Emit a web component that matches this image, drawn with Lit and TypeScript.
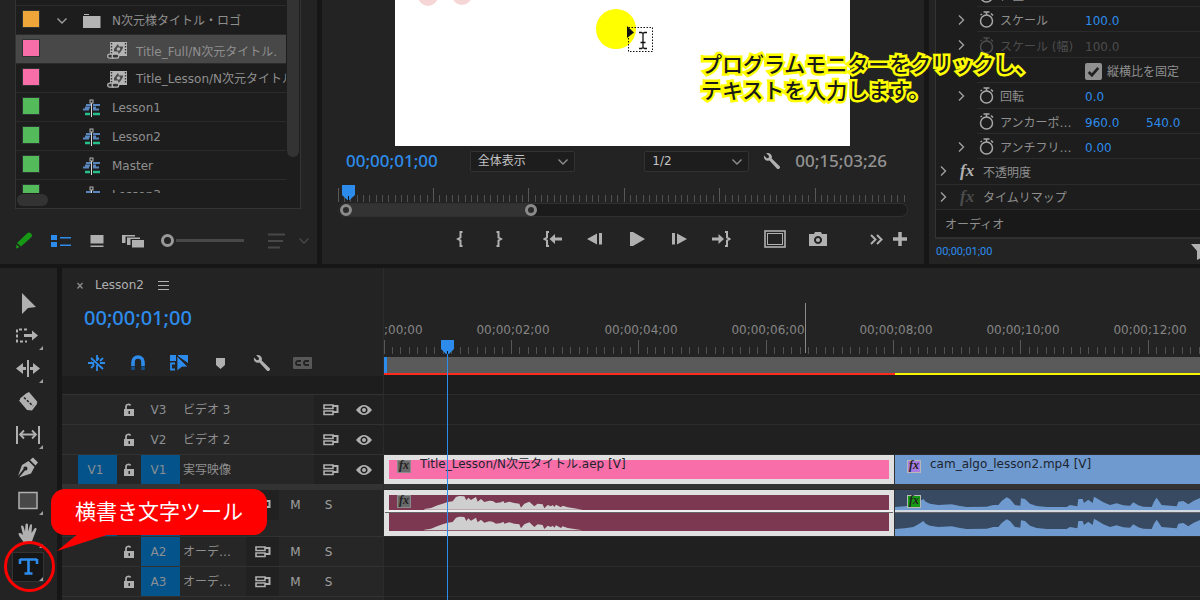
import { LitElement, html, svg, css, nothing } from "lit";
import { customElement, property } from "lit/decorators.js";

const base = css`
  *, *::before, *::after { box-sizing: border-box; }
  :host { display: block; color: #8f8f8f; font: 12px/16px "DejaVu Sans", "Noto Sans CJK JP", sans-serif; }
  button { display: flex; align-items: center; justify-content: center; padding: 0; margin: 0; border: 0; background: none; color: #b0b0b0; font: inherit; }
  svg { display: block; flex: none; }
`;

const chevronRight = html`<svg width="8" height="12" viewBox="0 0 8 12"><path d="M1 1.500 5.500 6 1 10.500" fill="none" stroke="#a0a0a0" stroke-width="1.400"/></svg>`;
const chevronDown = (c: string) => html`<svg width="12" height="12" viewBox="0 0 12 12"><path d="M1.500 3.500 6 8l4.500-4.500" fill="none" stroke=${c} stroke-width="1.400"/></svg>`;
const wrench = html`<svg width="18" height="18" viewBox="0 0 18 18"><path fill="#b0b0b0" d="M3.200 1.200 6 4 5.600 6 3.800 6.300 1 3.600C.4 6.400 2 8.900 5 8.800L6.500 8.600 13.800 16.400C15.500 18.200 18.200 15.600 16.400 13.900L8.700 6.600C9.800 3 7 .3 3.200 1.200Z"/></svg>`;

/* ---------- project panel ---------- */

const clipIcon = html`<svg width="20" height="19" viewBox="0 0 20 19">
  <rect x="3" y="1" width="17" height="14" fill="#b4b4b4"/>
  <path d="M4.500 2v12M18.500 2v12" stroke="#333" stroke-width="1.400" stroke-dasharray="1.500 1.500"/>
  <path d="M7 8 11 3l1 2.500h4V7l-2.500 4-2 2L11 10.500H7Z" fill="#4a4a4a"/><circle cx="11.500" cy="8" r="1.800" fill="#b4b4b4"/>
  <rect x=".7" y="13.200" width="6.500" height="4" rx="2" fill="#333" stroke="#b4b4b4" stroke-width="1.300"/>
  <rect x="5.200" y="13.200" width="6.500" height="4" rx="2" fill="#333" stroke="#b4b4b4" stroke-width="1.300"/></svg>`;
const sequenceIcon = html`<svg width="18" height="18" viewBox="0 0 18 18">
  <path d="M3 6h5M0 10.500h6M2 8.500h5M10 6h7M10 8.500h3M10 10.500h6" stroke="#5b86bd" stroke-width="2"/>
  <path d="M2 15h5M10 15h7" stroke="#27c08a" stroke-width="2.500"/>
  <path d="M8.500 3v15" stroke="#d8d8d8"/><rect x="7" y="1" width="3" height="3" fill="#222" stroke="#b4b4b4"/></svg>`;
const folderIcon = html`<svg width="18" height="14" viewBox="0 0 18 14"><path fill="#b4b4b4" d="M1 0h5v1H1zM0 2h17.500v12H0z"/></svg>`;

type Item = { color: string; kind: "bin" | "clip" | "seq"; name: string; selected?: boolean };
const items: Item[] = [
  { color: "#eea63a", kind: "bin", name: "N次元様タイトル・ロゴ" },
  { color: "#f86ea8", kind: "clip", name: "Title_Full/N次元タイトル.", selected: true },
  { color: "#f86ea8", kind: "clip", name: "Title_Lesson/N次元タイトル" },
  { color: "#53bb59", kind: "seq", name: "Lesson1" },
  { color: "#53bb59", kind: "seq", name: "Lesson2" },
  { color: "#53bb59", kind: "seq", name: "Master" },
  { color: "#53bb59", kind: "seq", name: "Lesson3" },
];

@customElement("project-panel")
class ProjectPanel extends LitElement {
  static styles = [base, css`
    :host { background: #232323; display: flex; flex-direction: column; height: 264px; padding: 0 16px 0 15px; }
    .box { height: 209px; background: #1d1d1d; border: 1px solid #343434; border-top: 0; display: grid; grid-template: 193px 15px / minmax(0, 1fr) 14px; }
    .list { overflow: hidden; margin: 0; padding: 0; list-style: none; }
    .cut { height: 6px; border-bottom: 1px solid #2b2b2b; }
    .item { display: flex; align-items: center; height: 29px; border-bottom: 1px solid #2b2b2b; padding: 2px 0 0 6px; white-space: nowrap; overflow: hidden; }
    .selected { background: #484848; }
    .selected .name { padding-top: 3px; }
    .swatch { flex: none; width: 18px; height: 18px; border: 1px solid #2e3434; margin-bottom: 5px; }
    .twirl { flex: none; width: 43px; display: flex; justify-content: center; }
    .icon { flex: none; width: 29px; }
    .clip { margin-left: 24px; }
    .vbar { padding: 0 1px; }
    .vthumb { height: 157px; background: #333; border-radius: 0 0 6px 6px; }
    .hthumb { width: 31px; height: 12px; margin: 1px 0 0 1px; background: #333; border-radius: 6px; }
    .foot { display: flex; align-items: center; height: 55px; padding-top: 8px; margin-right: -16px; }
    .foot button { flex: none; width: 36px; }
    .foot .pencil { width: 18px; margin-right: 10px; }
    .zoom { flex: none; appearance: none; width: 84px; height: 14px; margin: 0 15px 0 10px; background: linear-gradient(#484848, #484848) 15px 50% / 68px 3px no-repeat; }
    .zoom::-webkit-slider-thumb { appearance: none; width: 13px; height: 13px; border-radius: 50%; border: 3px solid #999; background: #232323; }
    .foot .sort { width: 32px; }
    .foot .more { width: 24px; }
  `];
  render() {
    return html`
      <div class="box">
        <ul class="list">
          <li class="cut"></li>
          ${items.map((i) => html`<li class="item ${i.selected ? "selected" : ""}">
            <span class="swatch" style="background:${i.color}"></span>
            <span class="twirl">${i.kind === "bin" ? chevronDown("#a0a0a0") : nothing}</span>
            <span class="icon ${i.kind === "clip" ? "clip" : ""}">${i.kind === "bin" ? folderIcon : i.kind === "clip" ? clipIcon : sequenceIcon}</span>
            <span class="name">${i.name}</span></li>`)}
        </ul>
        <div class="vbar"><div class="vthumb"></div></div>
        <div><div class="hthumb"></div></div>
      </div>
      <div class="foot">
        <button class="pencil" aria-label="Writable"><svg width="18" height="17" viewBox="0 0 18 17"><path d="M2 11 12 1.500Q14-.5 16 1.500 18 3.500 16 5.500L6 14.500Z" fill="#169a16"/><path d="M1.500 12.500 4.500 15.200 1 16.500Z" fill="#169a16"/></svg></button>
        <button aria-label="List view"><svg width="20" height="14" viewBox="0 0 20 14"><path fill="#2d8ceb" d="M0 1h6v5H0zM0 8h6v5H0zM9 3h11v1.500H9zM9 10.500h11V12H9z"/></svg></button>
        <button aria-label="Icon view"><svg width="14" height="14" viewBox="0 0 14 14"><path fill="#b0b0b0" d="M.5 1h13v8.500H.5zM.5 11.500h13V13H.5z"/></svg></button>
        <button aria-label="Freeform view"><svg width="24" height="14" viewBox="0 0 24 14"><path fill="#b0b0b0" d="M1 1h13v1.500H4.500V9H1z"/><path fill="#b0b0b0" d="M6 3.500h13V5H9.500v6H6z"/><path fill="#b0b0b0" d="M11 6h12v7.500H11z"/></svg></button>
        <input class="zoom" type="range" value="0" aria-label="Thumbnail size">
        <button class="sort" aria-label="Sort"><svg width="17" height="16" viewBox="0 0 17 16"><path d="M0 1.500h17M0 8h15M0 14.500h12" stroke="#484848" stroke-width="2"/></svg></button>
        <button class="more" aria-label="More">${chevronDown("#484848")}</button>
      </div>`;
  }
}

/* ---------- program monitor ---------- */

const ticks = (count: number, pitch: number, top: number, bottom: number) =>
  Array.from({ length: count }, (_, i) => svg`<path d="M${Math.floor(i * pitch) + 0.5} ${i % 15 ? bottom - 7 : top}V${bottom}" stroke=${i % 15 ? "#505050" : "#585858"}/>`);

@customElement("program-monitor")
class ProgramMonitor extends LitElement {
  static styles = [base, css`
    :host { background: #232323; position: relative; z-index: 1; height: 264px; }
    .stage { display: flex; justify-content: center; padding-right: 2px; }
    .frame { background: #fff; }
    .note { position: absolute; left: 379px; top: 50px; margin: 0; font: 500 21px/26px "Noto Sans CJK JP", sans-serif; color: #1a1a1a; white-space: nowrap; -webkit-text-stroke: 5px #ff0; paint-order: stroke fill; }
    .bar { display: flex; align-items: center; height: 30px; padding: 0 37px 0 24px; }
    .tc { font: 500 17px/24px "Noto Sans", sans-serif; color: #2d8ceb; }
    .total { color: #929292; margin-left: 14px; }
    .pick { position: relative; width: 105px; margin-left: 32px; }
    .pick svg { position: absolute; right: 6px; top: 5px; pointer-events: none; }
    .scale { margin-left: auto; margin-right: 14px; }
    select { appearance: none; width: 100%; height: 21px; padding: 0 7px; border: 1px solid #323232; border-radius: 2px; background: #1d1d1d; color: #c4c4c4; font: inherit; }
    .time { padding: 7px 16px 0; }
    .scrub { height: 14px; background: #1b1b1b; border: 1px solid #303030; border-radius: 7px; }
    .range { height: 100%; width: 197px; background: #333; display: flex; justify-content: space-between; border-radius: 7px; margin-left: 1px; }
    .grip { width: 12px; height: 12px; border: 3px solid #8a8a8a; border-radius: 50%; background: #2b2b2b; }
    .transport { display: flex; align-items: center; height: 44px; padding: 0 12px 0 118px; }
    .marks, .play, .out, .extra { display: flex; }
    .marks { margin-right: 14px; } .play { margin-right: 11px; } .extra { margin-left: auto; }
    .marks button { width: 39px; } .play button { width: 42px; } .out button { width: 43px; } .extra button { width: 24px; }
  `];
  render() {
    return html`
      <div class="stage"><svg class="frame" width="455" height="146" viewBox="0 0 455 146">
        <circle cx="33" cy="-4" r="10" fill="#f6d5d6"/><circle cx="67" cy="-5" r="10" fill="#f6d5d6"/>
        <circle cx="221" cy="29" r="20" fill="#ff0"/>
        <rect x="233.500" y="27.500" width="24" height="24" fill="none" stroke="#111" stroke-dasharray="1.500 1.500"/>
        <path d="M232 26v12l7-5.500z" fill="#111"/>
        <path d="M244 32.500h2.500l1.500 1 1.500-1h2.500M248 33.500v14M245.500 42.500h5M244 48.500h2.500l1.500-1 1.500 1h2.500" fill="none" stroke="#111" stroke-width="1.300"/>
      </svg></div>
      <div class="bar">
        <span class="tc">00;00;01;00</span>
        <label class="pick"><select aria-label="Zoom"><option>全体表示</option></select>${chevronDown("#8f8f8f")}</label>
        <label class="pick scale"><select aria-label="Resolution"><option>1/2</option></select>${chevronDown("#8f8f8f")}</label>
        ${wrench}
        <span class="tc total">00;15;03;26</span>
      </div>
      <div class="time">
        <svg width="100%" height="20">${ticks(90, 6.36, 5, 19)}
          <path d="M4 2h13v10l-6.500 6L4 12z" fill="#2d8ceb"/><path d="M10.500 13v5" stroke="#111"/></svg>
        <div class="scrub"><div class="range"><i class="grip"></i><i class="grip"></i></div></div>
      </div>
      <div class="transport">
        <div class="marks">
          <button aria-label="Mark in"><svg width="8" height="16" viewBox="0 0 8 16"><path d="M6.500 1H4.500V6.500L2 8l2.500 1.500V15h2" fill="none" stroke="#b0b0b0" stroke-width="2"/></svg></button>
          <button aria-label="Mark out"><svg width="8" height="16" viewBox="0 0 8 16"><path d="M1.500 1h2V6.500L6 8 3.500 9.500V15h-2" fill="none" stroke="#b0b0b0" stroke-width="2"/></svg></button>
        </div>
        <div class="play">
          <button aria-label="Go to in"><svg width="20" height="16" viewBox="0 0 20 16"><path d="M6 1H4V6.500L1.500 8 4 9.500V15h2" fill="none" stroke="#b0b0b0" stroke-width="2"/><path d="M6.500 8 12 3v3.500h7v3h-7V13z" fill="#b0b0b0"/></svg></button>
          <button aria-label="Step back"><svg width="16" height="12" viewBox="0 0 16 12"><path d="M0 6 10 .5v11zM12 0h3v11.500h-3z" fill="#b0b0b0"/></svg></button>
          <button aria-label="Play"><svg width="15" height="14" viewBox="0 0 15 14"><path d="M0 0h3L15 7 3 14H0z" fill="#b0b0b0"/></svg></button>
          <button aria-label="Step forward"><svg width="16" height="12" viewBox="0 0 16 12"><path d="M16 6 6 .5v11zM1 0h3v11.500H1z" fill="#b0b0b0"/></svg></button>
          <button aria-label="Go to out"><svg width="20" height="16" viewBox="0 0 20 16"><path d="M14 1h2V6.500L18.500 8 16 9.500V15h-2" fill="none" stroke="#b0b0b0" stroke-width="2"/><path d="M13 8 7.500 3v3.500H1v3h6.500V13z" fill="#b0b0b0"/></svg></button>
        </div>
        <div class="out">
          <button aria-label="Full frame"><svg width="22" height="18" viewBox="0 0 22 18"><rect x="1" y="1" width="20" height="16" fill="none" stroke="#b0b0b0" stroke-width="1.600"/><rect x="3.500" y="3.500" width="15" height="11" fill="none" stroke="#b0b0b0"/></svg></button>
          <button aria-label="Export frame"><svg width="18" height="14" viewBox="0 0 18 14"><path fill="#b0b0b0" fill-rule="evenodd" d="M0 2h5l1-2h6l1 2h5v12H0zM9 4a4 4 0 1 0 .01 0zM9 6a2 2 0 1 1-.01 0z"/></svg></button>
        </div>
        <div class="extra">
          <button aria-label="More"><svg width="13" height="11" viewBox="0 0 13 11"><path d="M1 1l4.500 4.500L1 10M7 1l4.500 4.500L7 10" fill="none" stroke="#b0b0b0" stroke-width="2"/></svg></button>
          <button aria-label="Add button"><svg width="14" height="14" viewBox="0 0 14 14"><path d="M7 0v14M0 7h14" stroke="#b0b0b0" stroke-width="3.500"/></svg></button>
        </div>
      </div>
      <p class="note">プログラムモニターをクリックし、<br>テキストを入力します。</p>`;
  }
}

/* ---------- effect controls ---------- */

const stopwatch = html`<svg width="15" height="17" viewBox="0 0 15 17"><circle cx="7.500" cy="10" r="6" fill="none" stroke="currentColor" stroke-width="1.500"/><path d="M7.500 1v3M4.500 1h6M12 2.500l2 2M1.500 4l1.500-1" stroke="currentColor" stroke-width="1.500"/></svg>`;

type Param = { label: string; values: string[]; twirl?: boolean; dim?: boolean };
const params: Param[] = [
  { label: "スケール", values: ["100.0"], twirl: true },
  { label: "スケール (幅)", values: ["100.0"], twirl: true, dim: true },
  { label: "", values: [] },
  { label: "回転", values: ["0.0"], twirl: true },
  { label: "アンカーポ…", values: ["960.0", "540.0"] },
  { label: "アンチフリ…", values: ["0.00"], twirl: true },
];

@customElement("effect-controls")
class EffectControls extends LitElement {
  static styles = [base, css`
    :host { background: #232323; display: flex; flex-direction: column; height: 264px; padding-left: 6px; overflow: hidden; }
    .rows { flex: 1; display: grid; grid-template-rows: 7px repeat(8, 1fr) 27px; background: #1d1d1d; border-left: 1px solid #343434; border-bottom: 2px solid #303030; min-height: 0; }
    .first { overflow: hidden; display: flex; flex-direction: column; justify-content: flex-end; }
    .row { display: grid; align-items: center; white-space: nowrap; }
    .first .row { flex: none; height: 25px; }
    .param { background: linear-gradient(#2b2b2b, #2b2b2b) 41px 100% / 100% 1px no-repeat; grid-template-columns: 41px 23px 85px 61px 1fr; }
    .tw { padding-left: 22px; }
    .name, .value, .ratio { padding-top: 3px; }
    .watch { color: #a8a8a8; padding-left: 2px; }
    .dim, .dim .watch, .dim .value { color: #4c4c4c; }
    .value { color: #2d8ceb; }
    .ratio { grid-column: 4 / -1; display: flex; align-items: center; gap: 5px; }
    .tick { appearance: none; width: 17px; height: 17px; margin: 0; border-radius: 2px; background: #909090 url("data:image/svg+xml,%3Csvg xmlns='http://www.w3.org/2000/svg' viewBox='0 0 16 16'%3E%3Cpath d='M3.500 8.500 6.500 11.500 12.500 4.500' fill='none' stroke='%23222' stroke-width='2.500'/%3E%3C/svg%3E"); }
    .group { grid-template-columns: 20px 23px 1fr; padding-left: 4px; border-bottom: 1px solid #2b2b2b; }
    .fx { font: italic bold 17px/16px "Liberation Serif", serif; color: #b0b0b0; }
    .off { color: #4c4c4c; }
    .audio { display: flex; align-items: center; padding: 2px 0 0 9px; background: #191919; }
    .foot { display: flex; align-items: center; justify-content: space-between; height: 25px; }
    .tc { font: 11px/16px Roboto, sans-serif; color: #2d8ceb; padding-left: 1px; }
  `];
  row(p: Param) {
    return html`<div class="row param ${p.dim ? "dim" : ""}">
      <span class="tw">${p.twirl ? chevronRight : nothing}</span>
      <span class="watch">${stopwatch}</span><span class="name">${p.label}</span>
      ${p.values.map((v) => html`<span class="value">${v}</span>`)}</div>`;
  }
  render() {
    return html`
      <div class="rows">
        <div class="first">${this.row({ label: "位置", values: [] })}</div>
        ${params.map((p) => p.label ? this.row(p) : html`<div class="row param">
          <span></span><span></span><span></span>
          <label class="ratio"><input class="tick" type="checkbox" checked>縦横比を固定</label></div>`)}
        <div class="row group">${chevronRight}<span class="fx">fx</span><span class="name">不透明度</span></div>
        <div class="row group">${chevronRight}<span class="fx off">fx</span><span class="name">タイムリマップ</span></div>
        <div class="audio">オーディオ</div>
      </div>
      <div class="foot"><span class="tc">00;00;01;00</span>
        <svg width="9" height="16" viewBox="0 0 9 16"><path d="M0 0h16L10 7v7l-4 2V7z" fill="#b0b0b0"/></svg></div>`;
  }
}

/* ---------- tools ---------- */

const g = "#b0b0b0";
const tools = [
  { name: "Selection", art: svg`<path d="M7 3v21l6-6 8-1z" fill=${g}/>` },
  { name: "Track select", more: true, art: svg`<path d="M12 6.500H2v12h10" fill="none" stroke=${g} stroke-width="2" stroke-dasharray="3 2"/><path d="M9 11h8V7.500l6 5-6 5V14H9z" fill=${g}/>` },
  { name: "Ripple edit", more: true, art: svg`<path d="M13 4v17" stroke=${g} stroke-width="2"/><path d="M1 12.500 8 7v4h3v3H8v4zM25 12.500 18 7v4h-3v3h3v4z" fill=${g}/>` },
  { name: "Razor", art: svg`<path d="M11 4.500 14 3l8.500 10q-1 .500-.500 2l-5 6.500L12 21 4 11.500q1.500-.500 1-2z" fill=${g}/><path d="M9 8.500l9 8.500" stroke="#232323" stroke-width="1.600" stroke-dasharray="2.500 1.500"/>` },
  { name: "Slip", more: true, art: svg`<path d="M2 4v18M24 4v18" stroke=${g} stroke-width="2"/><path d="M5 12.500h16M9 8.500l-4 4 4 4M17 8.500l4 4-4 4" fill="none" stroke=${g} stroke-width="1.800"/>` },
  { name: "Pen", art: svg`<path d="M15 5l3-2.500 5 5L20.500 10.500z" fill=${g}/><path d="M13.500 6l6 6-3.500 6.500L4 22.500l6-7a2 2 0 1 0-1.500-1.500L3 21 7 10z" fill=${g}/>` },
  { name: "Rectangle", more: true, art: svg`<rect x="4" y="4.500" width="18" height="16" fill="#484848" stroke=${g} stroke-width="1.500"/>` },
  { name: "Hand", more: true, art: svg`<path d="M9 22C7 18 4 16 3.500 12.500 5 11.500 6.500 12.500 8 14L6 5.500C6 4 8 4 8.500 5.500l1.500 5L10.500 3.500C11 2 12.500 2 13 3.500v7L15 4C15.500 3 17 3 17 4.500l-.500 7.500L19.500 7.500C20.500 6.500 22 7.500 21.500 8.500L18 17.500l-1.500 4.500z" fill=${g}/>` },
  { name: "Type", more: true, active: true, art: svg`<path d="M5 5v5M5 5.500h17M22 5v5M13.500 5v15M9.500 19.500h8" fill="none" stroke="#2d8ceb" stroke-width="2.600"/>` },
];

@customElement("tool-strip")
class ToolStrip extends LitElement {
  static styles = [base, css`
    :host { background: #232323; padding-top: 20px; }
    .tool { position: relative; width: 32px; height: 30px; margin: 0 auto 3px 12px; border: 1px solid transparent; }
    .active { background: #161616; border-color: #333; }
    .active::before { content: ""; position: absolute; left: -9px; top: -12px; width: 51px; height: 51px; border: 3px solid #f00; border-radius: 50%; }
    .more::after { content: ""; position: absolute; right: 0; bottom: 0; border: 2px solid; border-color: transparent #a0a0a0 #a0a0a0 transparent; }
  `];
  render() {
    return tools.map((t) => html`<button class="tool ${t.active ? "active" : ""} ${t.more ? "more" : ""}" aria-label=${t.name}>
      <svg width="26" height="26" viewBox="0 0 26 26">${t.art}</svg></button>`);
  }
}

/* ---------- timeline ---------- */

const lock = html`<svg width="12" height="14" viewBox="0 0 12 14"><path fill-rule="evenodd" fill="#b0b0b0" d="M1 6h10v7H1zM5.500 8v3h1.500V8z"/><path d="M3 6.500V3.500C3 1 7 1 7.500 2.500" fill="none" stroke="#b0b0b0" stroke-width="1.700"/></svg>`;
const sync = html`<svg width="16" height="12" viewBox="0 0 16 12"><path d="M1 1h9v3.500H1zM1 7h9v3.500H1z" fill="none" stroke="#b0b0b0" stroke-width="1.600"/><path d="M10 2h4.500v6H10" fill="none" stroke="#b0b0b0" stroke-width="2"/></svg>`;
const eye = html`<svg width="16" height="12" viewBox="0 0 16 12"><path fill-rule="evenodd" fill="#b0b0b0" d="M0 6Q8-4 16 6 8 16 0 6zM8 2.500a3.500 3.500 0 1 0 .01 0z"/><circle cx="8" cy="6" r="2" fill="#b0b0b0"/></svg>`;

const b = "#2d8ceb";
const tlTools = [
  { name: "Nest", art: svg`<path d="M9 1v6M9 11v6M0 9h6M12 9h5M3 4l12 11M3 14l3-3M12 7l3-3M11 4l-2 2M3 8l3 3" stroke=${b} stroke-width="1.800"/>` },
  { name: "Snap", art: svg`<path d="M4 12V8a5 5 0 0 1 10 0v4" fill="none" stroke=${b} stroke-width="3.600"/><path d="M2.200 12.500v3.500h3.600v-3.500zM12.200 12.500v3.500h3.600v-3.500z" fill="#14508c"/>` },
  { name: "Linked selection", art: svg`<path d="M0 1h6v6H0zM8 1h10v8L8 2z" fill=${b}/><path d="M5 9.500H1v6h4" fill="none" stroke=${b} stroke-width="1.800"/><path d="M7 2l11 11h-6l-5 4z" fill=${b} stroke="#232323" stroke-width=".8"/>` },
  { name: "Marker", art: svg`<path d="M5 4h9v7l-4.500 4L5 11z" fill=${g}/>` },
  { name: "Settings", art: nothing },
  { name: "Captions", art: svg`<rect y="3" width="19" height="12" rx="1" fill="#585858"/><path d="M8 7H5a2 2 0 0 0 0 4h3M16 7h-3a2 2 0 0 0 0 4h3" fill="none" stroke="#232323" stroke-width="1.800"/>` },
];

const titleWave = [[130,208],[150,205],[170,197],[185,192],[200,187],[215,185],[225,172],[235,169],[250,170],[256,182],[262,174],[270,181],[285,172],[290,186],[300,178],[310,187],[325,183],[335,184],[345,190],[360,188],[367,184],[370,190],[385,186],[400,190],[415,192],[420,204],[430,192],[445,186],[460,200],[470,192],[485,194],[490,206],[500,196],[510,200],[515,196],[520,202],[525,195],[540,203],[545,198],[560,203],[580,206],[605,210]];
const lessonWave = [[345,202],[375,200],[400,196],[415,188],[430,178],[437,186],[450,192],[475,196],[515,194],[540,199],[560,202],[620,201],[640,196],[655,196],[665,184],[680,173],[690,178],[705,196],[721,198],[723,176],[735,178],[750,192],[770,199],[800,202],[860,202],[870,196],[892,200],[895,178],[908,178],[912,190],[925,180],[938,190],[942,171],[950,176],[970,188],[990,196],[1010,191],[1030,197],[1050,198],[1060,188],[1075,197],[1090,201],[1115,202],[1122,186],[1130,174],[1145,196],[1190,200],[1195,186],[1210,184],[1225,194],[1240,184],[1262,174]];
const wavePath = (pts: number[][], dy: number, floor: number) =>
  `M${pts[0][0]} ${floor}` + pts.map(([x, y]) => `L${x} ${y + dy}`).join("") + `V${floor}Z`;

type Track = { id: string; name: string; kind: "video" | "audio"; source?: string; target?: boolean };
const video: Track[] = [
  { id: "V3", name: "ビデオ 3", kind: "video" },
  { id: "V2", name: "ビデオ 2", kind: "video" },
  { id: "V1", name: "実写映像", kind: "video", source: "V1", target: true },
];
const audio: Track[] = [
  { id: "", name: "", kind: "audio", source: " ", target: true },
  { id: "A2", name: "オーデ…", kind: "audio", target: true },
  { id: "A3", name: "オーデ…", kind: "audio", target: true },
];

@customElement("track-header")
class TrackHeader extends LitElement {
  @property({ attribute: false }) track!: Track;
  static styles = [base, css`
    :host { border-top: 1px solid #323232; background: #262626; }
    .head { display: grid; grid-template-columns: 39px 24px 39px minmax(0, 1fr) auto; height: 100%; padding-left: 16px; }
    .cell { display: flex; align-items: center; justify-content: center; height: 30px; }
    .patch { height: 100%; color: #8a8f94; padding-right: 4px; }
    .on { background: #04538a; }
    .name { display: flex; align-items: center; height: 30px; padding-left: 3px; white-space: nowrap; }
    .ctl { display: flex; height: 30px; }
    .video { background: #212121; width: 69px; }
    .ctl button { width: 33px; }
    .audio { width: 137px; }
    .audio button { color: #a0a0a0; }
    .audio .sync { background: #212121; }
  `];
  render() {
    const t = this.track;
    return html`<div class="head">
      <span class="cell patch ${t.source ? "on" : ""}">${t.source}</span>
      <span class="cell">${lock}</span>
      <span class="cell patch ${t.target ? "on" : ""}">${t.id}</span>
      <span class="name">${t.name}</span>
      ${t.kind === "video"
        ? html`<span class="ctl video"><button aria-label="Sync lock">${sync}</button><button aria-label="Toggle output">${eye}</button></span>`
        : html`<span class="ctl audio"><button class="sync" aria-label="Sync lock">${sync}</button><button>M</button><button>S</button></span>`}
    </div>`;
  }
}

@customElement("time-line")
class TimeLine extends LitElement {
  static styles = [base, css`
    :host { background: #232323; display: grid; grid-template-columns: 321px minmax(0, 1fr); overflow: hidden; }
    .top { height: 108px; padding-left: 15px; }
    .tab { display: flex; align-items: center; height: 34px; color: #b0b0b0; }
    .tab button { width: 18px; justify-content: flex-start; }
    .tab .menu { margin-left: 14px; }
    .tc { font: 500 20px/32px "Noto Sans", sans-serif; color: #2d8ceb; padding-left: 7px; }
    .tltools { display: flex; height: 57px; align-items: center; }
    .tltools button { width: 41px; }
    .band { height: 18px; background: #1d1d1d; }
    .tracks { display: grid; grid-template-rows: 30px 30px 30px 5px 47px 30px 30px 8px; }
    .split { background: #333; }
    .rest { background: #262626; border-top: 1px solid #323232; }
    .right { position: relative; border-left: 1px solid #2b2b2b; overflow: hidden; }
    .label { font: 12px "DejaVu Sans", sans-serif; fill: #868686; text-anchor: middle; }
    .work { height: 16px; background: #5a5a5a; border-left: 3px solid #2d8ceb; }
    .render { display: flex; height: 3px; border-bottom: 1px solid #1d1d1d; }
    .red { width: 511px; background: #ff2a1c; } .yellow { flex: 1; background: #f6f600; }
    .lane { background: #202020; border-top: 1px solid #2b2b2b; display: flex; min-width: 0; }
    .clip { position: relative; color: #1c2430; }
    .title { width: 510px; border: 5px solid #e0e0e0; background: #f86ea8; }
    .lesson { flex: 1; background: #6f9acf; border-left: 1px solid #333; overflow: hidden; }
    .cap { display: flex; align-items: center; gap: 9px; height: 16px; white-space: nowrap; }
    .title .cap { margin: -4px 0 0 8px; }
    .lesson .cap { padding-left: 12px; margin-top: 1px; }
    .badge { width: 14px; height: 13px; margin-top: 4px; background: #6a6a6a; border: 1px solid #8a8a8a; font: italic bold 12px/9px "Liberation Serif", serif; text-align: center; color: #222; }
    .purple { background: #a87be0; border-color: #b8b8b8; }
    .green { background: #169a16; border-color: #b8b8b8; }
    .sound { background: #7c3850; }
    .lesson.sound { background: #384a61; }
    .sound svg { position: absolute; left: 0; top: 0; overflow: visible; }
    .sound .cap { position: relative; }
    .head { position: absolute; left: 57px; top: 72px; width: 13px; bottom: 0; }
    .stem { width: 1px; height: 100%; margin-left: 6px; background: #2d8ceb; }
    .head svg { position: absolute; top: 0; left: 0; }
  `];
  ruler() {
    return html`<svg width="100%" height="89">
      ${ticks(100, 8.49, 72, 86)}
      ${[0, 2, 4, 6, 8, 10, 12].map((s, i) => svg`<text class="label" x=${Math.round(i * 127.4) + 2} y="66">00;00;${String(s).padStart(2, "0")};00</text>`)}
      <path d="M421.500 35v50" stroke="#8a8a8a"/></svg>`;
  }
  render() {
    return html`
      <div>
        <div class="top">
          <div class="tab"><button aria-label="Close"><svg width="6" height="7" viewBox="0 0 6 7"><path d="M.5 1l5 5.500M5.500 1l-5 5.500" stroke="#8f8f8f" stroke-width="1.300"/></svg></button>
            <span>Lesson2</span><button class="menu" aria-label="Panel menu"><svg width="11" height="9" viewBox="0 0 11 9"><path d="M0 .5h11M0 4.500h11M0 8.500h11" stroke="#b0b0b0"/></svg></button></div>
          <div class="tc">00;00;01;00</div>
          <div class="tltools">${tlTools.map((t) => html`<button aria-label=${t.name}>${t.name === "Settings" ? wrench : html`<svg width="19" height="18" viewBox="0 0 19 18">${t.art}</svg>`}</button>`)}</div>
        </div>
        <div class="band"></div>
        <div class="tracks">
          ${video.map((t) => html`<track-header .track=${t}></track-header>`)}
          <div class="split"></div>
          ${audio.map((t) => html`<track-header .track=${t}></track-header>`)}
          <div class="rest"></div>
        </div>
      </div>
      <div class="right">
        ${this.ruler()}
        <div class="work"></div>
        <div class="render"><i class="red"></i><i class="yellow"></i></div>
        <div class="band"></div>
        <div class="tracks">
          <div class="lane"></div><div class="lane"></div>
          <div class="lane">
            <div class="clip title"><div class="cap"><span class="badge">fx</span><span>Title_Lesson/N次元タイトル.aep [V]</span></div></div>
            <div class="clip lesson"><div class="cap"><span class="badge purple">fx</span><span>cam_algo_lesson2.mp4 [V]</span></div></div>
          </div>
          <div class="split"></div>
          <div class="lane">
            <div class="clip title sound">
              <svg width="100%" height="36"><g transform="scale(.3333) translate(-24 -166)" fill="#cfcfcf"><path d=${wavePath(titleWave, 0, 210)}/><path d=${wavePath(titleWave, 62, 272)}/></g>
              <path d="M-4 16h508" stroke="#f0f0f0" stroke-width="2"/><path d="M-4 17.500h508" stroke="#666"/></svg>
              <div class="cap"><span class="badge">fx</span></div></div>
            <div class="clip lesson sound">
              <svg width="100%" height="46"><g transform="scale(.3333) translate(-345 -151)" fill="#6f9acf"><path d=${wavePath(lessonWave, 0, 213)}/><path d=${wavePath(lessonWave, 66, 292)}/></g>
              <path d="M0 21h1000" stroke="#d4dae2" stroke-width="2"/><path d="M0 22.500h1000" stroke="#666"/></svg>
              <div class="cap"><span class="badge green">fx</span></div></div>
          </div>
          <div class="lane"></div><div class="lane"></div><div class="lane"></div>
        </div>
        <div class="head"><div class="stem"></div><svg width="13" height="14" viewBox="0 0 13 14"><path d="M0 0h13v9l-5 5H5L0 9z" fill="#2d8ceb"/><path d="M6.500 11v3" stroke="#111"/></svg></div>
      </div>`;
  }
}

/* ---------- workspace ---------- */

@customElement("app-root")
class AppRoot extends LitElement {
  static styles = [base, css`
    :host { background: #161616; height: 100vh; overflow: hidden; display: grid; grid-template-rows: auto minmax(0, 1fr); gap: 4px; }
    .upper { display: grid; grid-template-columns: 317px minmax(0, 1fr) 271px; gap: 5px; }
    .lower { position: relative; display: grid; grid-template-columns: 57px minmax(0, 1fr); gap: 5px; min-height: 0; }
    .callout { position: absolute; left: 51px; top: 221px; padding: 0 24px 4px; margin: 0; border-radius: 14px; background: #f00; color: #fff; font: 400 21px/42px "Noto Sans CJK JP", sans-serif; white-space: nowrap; }
    .tail { position: absolute; left: 6px; top: 44px; }
  `];
  render() {
    return html`
      <div class="upper"><project-panel></project-panel><program-monitor></program-monitor><effect-controls></effect-controls></div>
      <div class="lower"><tool-strip></tool-strip><time-line></time-line>
        <p class="callout">横書き文字ツール<svg class="tail" width="56" height="18" viewBox="0 0 56 18"><path d="M22 0h34L0 18z" fill="#f00"/></svg></p>
      </div>`;
  }
}
